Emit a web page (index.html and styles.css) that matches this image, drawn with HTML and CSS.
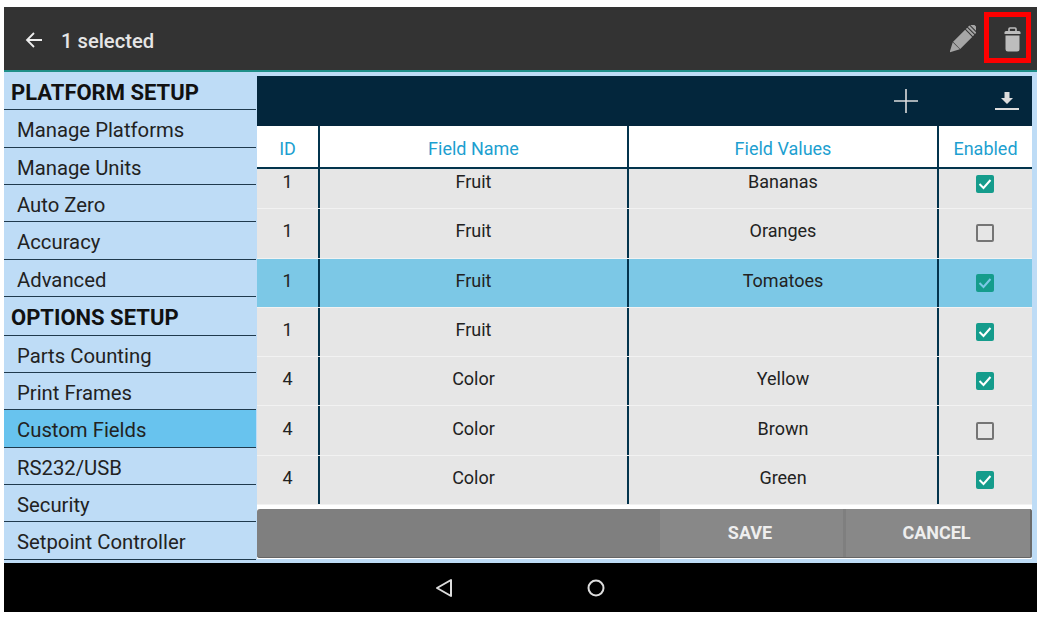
FILE: index.html
```html
<!DOCTYPE html>
<html lang="en">
<head>
    <meta charset="UTF-8">
    <title>Custom Fields</title>
    <link rel="stylesheet" href="styles.css">
</head>
<body>
    <div class="screen">
        <div class="app-bar">
            <svg class="back-icon" width="18" height="16" viewBox="0 0 18 16"><path d="M9 1 2 8l7 7M2 8h15" fill="none" stroke="#eee" stroke-width="1.8"/></svg>
            <span class="app-title">1 selected</span>
            <svg class="pencil-icon" width="26" height="28" viewBox="0 0 26 28">
                <g transform="rotate(45 13 14)" fill="#a6a6a6">
                    <rect x="8" y="-4" width="10" height="3" rx="1"/>
                    <rect x="8" y="0" width="10" height="2"/>
                    <rect x="8" y="3" width="10" height="2"/>
                    <rect x="8" y="6" width="10" height="17"/>
                    <path d="M8 23.500h10L13 33z"/>
                </g>
            </svg>
            <div class="delete-box">
                <svg width="17" height="25" viewBox="0 0 17 25">
                    <path d="M5 4.500V2q0-1 1-1h5q1 0 1 1v2.500" fill="none" stroke="#bdbdbd" stroke-width="1.600"/>
                    <path d="M2 4h13q1.500 0 1.500 1.500V7H.5V5.500Q.5 4 2 4z" fill="#bdbdbd"/>
                    <path d="M1.500 8.500h14V22q0 2.500-2.500 2.500H4Q1.500 24.500 1.500 22z" fill="#bdbdbd"/>
                </svg>
            </div>
        </div>
        <div class="main">
            <div class="sidebar">
                <div class="side-head">PLATFORM SETUP</div>
                <div class="side-item">Manage Platforms</div>
                <div class="side-item">Manage Units</div>
                <div class="side-item">Auto Zero</div>
                <div class="side-item">Accuracy</div>
                <div class="side-item">Advanced</div>
                <div class="side-head">OPTIONS SETUP</div>
                <div class="side-item">Parts Counting</div>
                <div class="side-item">Print Frames</div>
                <div class="side-item active">Custom Fields</div>
                <div class="side-item">RS232/USB</div>
                <div class="side-item">Security</div>
                <div class="side-item">Setpoint Controller</div>
            </div>
            <div class="panel">
                <div class="toolbar">
                    <svg class="plus-icon" width="26" height="26" viewBox="0 0 26 26"><path d="M13 1v24M1 13h24" stroke="#ddd" stroke-width="1.600"/></svg>
                    <svg class="download-icon" width="24" height="20" viewBox="0 0 24 20"><path d="M9.500 1h5v6h3.500l-6 6-6-6h3.500z" fill="#ddd"/><path d="M0 18h24" stroke="#ddd" stroke-width="2"/></svg>
                </div>
                <div class="table-head">
                    <div class="cell id">ID</div>
                    <div class="cell name">Field Name</div>
                    <div class="cell values">Field Values</div>
                    <div class="cell enabled">Enabled</div>
                </div>
                <div class="rows">
                    <div class="row">
                        <div class="cell id">1</div><div class="cell name">Fruit</div><div class="cell values">Bananas</div>
                        <div class="cell enabled"><span class="check on"><svg width="14" height="12" viewBox="0 0 14 12"><path d="M1.500 6l4 4 7-8" fill="none" stroke="#fff" stroke-width="2"/></svg></span></div>
                    </div>
                    <div class="row">
                        <div class="cell id">1</div><div class="cell name">Fruit</div><div class="cell values">Oranges</div>
                        <div class="cell enabled"><span class="check"></span></div>
                    </div>
                    <div class="row selected">
                        <div class="cell id">1</div><div class="cell name">Fruit</div><div class="cell values">Tomatoes</div>
                        <div class="cell enabled"><span class="check on"><svg width="14" height="12" viewBox="0 0 14 12"><path d="M1.500 6l4 4 7-8" fill="none" stroke="#7cc8e6" stroke-width="2"/></svg></span></div>
                    </div>
                    <div class="row">
                        <div class="cell id">1</div><div class="cell name">Fruit</div><div class="cell values"></div>
                        <div class="cell enabled"><span class="check on"><svg width="14" height="12" viewBox="0 0 14 12"><path d="M1.500 6l4 4 7-8" fill="none" stroke="#fff" stroke-width="2"/></svg></span></div>
                    </div>
                    <div class="row">
                        <div class="cell id">4</div><div class="cell name">Color</div><div class="cell values">Yellow</div>
                        <div class="cell enabled"><span class="check on"><svg width="14" height="12" viewBox="0 0 14 12"><path d="M1.500 6l4 4 7-8" fill="none" stroke="#fff" stroke-width="2"/></svg></span></div>
                    </div>
                    <div class="row">
                        <div class="cell id">4</div><div class="cell name">Color</div><div class="cell values">Brown</div>
                        <div class="cell enabled"><span class="check"></span></div>
                    </div>
                    <div class="row">
                        <div class="cell id">4</div><div class="cell name">Color</div><div class="cell values">Green</div>
                        <div class="cell enabled"><span class="check on"><svg width="14" height="12" viewBox="0 0 14 12"><path d="M1.500 6l4 4 7-8" fill="none" stroke="#fff" stroke-width="2"/></svg></span></div>
                    </div>
                </div>
                <div class="actions">
                    <button class="action-btn save">SAVE</button>
                    <button class="action-btn cancel">CANCEL</button>
                </div>
            </div>
        </div>
        <div class="nav-bar">
            <svg width="18" height="20" viewBox="0 0 18 20"><path d="M16 2v16L2 10z" fill="none" stroke="#ddd" stroke-width="2" stroke-linejoin="round"/></svg>
            <svg width="20" height="20" viewBox="0 0 20 20"><circle cx="10" cy="10" r="7.500" fill="none" stroke="#ddd" stroke-width="2"/></svg>
        </div>
    </div>
</body>
</html>
```

FILE: styles.css
```css
html, body {
    margin: 0;
    background: #fff;
}
body {
    font-family: Roboto, sans-serif;
    padding: 7px 7px 7px 4px;
    height: 605px;
    overflow: hidden;
}
.screen {
    display: flex;
    flex-direction: column;
    height: 605px;
}
.app-bar {
    height: 65px;
    flex: none;
    box-sizing: border-box;
    display: flex;
    align-items: center;
    background: #333;
    border-bottom: 2px solid #1f8f88;
    padding-left: 21px;
    padding-right: 6px;
}
.back-icon {
    margin-right: 18px;
    margin-top: 2px;
}
.app-title {
    flex: 1;
    color: #e6e6e6;
    font-size: 20.200px;
    font-weight: 500;
    padding-top: 5px;
}
.pencil-icon {
    margin-right: 8px;
    margin-top: 1px;
}
.delete-box {
    width: 37px;
    height: 41px;
    border: 5px solid #f00;
    margin-bottom: 2px;
    display: flex;
    align-items: center;
    justify-content: center;
}
.delete-box svg {
    margin-left: 9px;
    margin-top: 3px;
    flex: none;
}
.main {
    flex: 1;
    display: flex;
    background: #bedcf6;
    min-height: 0;
}
.sidebar {
    width: 252px;
    padding-top: 1px;
    box-sizing: border-box;
}
.side-head {
    height: 37.450px;
    line-height: 39px;
    box-sizing: border-box;
    padding-left: 7px;
    font-size: 22px;
    font-weight: 700;
    color: #111;
    border-bottom: 1px solid #1f3a4d;
}
.side-item + .side-head {
    height: 38.600px;
    line-height: 41px;
}
.side-item {
    height: 37.350px;
    line-height: 40px;
    box-sizing: border-box;
    padding-left: 13px;
    font-size: 20.300px;
    color: #222;
    border-bottom: 1px solid #1f3a4d;
}
.side-item.active {
    background: #68c3ee;
}
.panel {
    width: 775px;
    margin: 4px 0 4px 1px;
    display: flex;
    flex-direction: column;
    background: #fff;
}
.toolbar {
    height: 50px;
    flex: none;
    background: #03263c;
    display: flex;
    align-items: center;
    justify-content: flex-end;
}
.plus-icon {
    margin-right: 76px;
}
.download-icon {
    margin-right: 13px;
}
.table-head, .row {
    display: grid;
    grid-template-columns: 63px 309px 310px 93px;
}
.table-head {
    height: 43px;
    flex: none;
    box-sizing: border-box;
    background: #fff;
    border-bottom: 2px solid #03344d;
    color: #1d9fd0;
    font-size: 18px;
}
.cell {
    display: flex;
    align-items: center;
    justify-content: center;
    box-sizing: border-box;
    border-right: 2px solid #03344d;
    padding-bottom: 5px;
}
.cell.enabled {
    border-right: none;
    padding-bottom: 0;
}
.row .cell.enabled {
    padding-right: 1px;
}
.table-head .cell {
    padding-top: 3px;
    padding-bottom: 0;
}
.rows {
    height: 336px;
    flex: none;
    overflow: hidden;
}
.row {
    height: 49.300px;
    box-sizing: border-box;
    background: #e6e6e6;
    border-bottom: 1px solid #f2f2f2;
    font-size: 18px;
    color: #222;
}
.row:first-child {
    margin-top: -9px;
}
.row.selected {
    background: #7cc8e6;
}
.check {
    width: 18px;
    height: 18px;
    box-sizing: border-box;
    border: 2px solid #757575;
    border-radius: 2px;
    display: flex;
    align-items: center;
    justify-content: center;
}
.check.on {
    background: #159c8c;
    border: none;
}
.actions {
    margin-top: 4px;
    height: 49px;
    flex: none;
    display: flex;
    justify-content: flex-end;
    background: #7f7f7f;
    border-radius: 3px;
    overflow: hidden;
    box-shadow: inset 0 -1px #666;
}
.action-btn {
    font-family: Roboto, sans-serif;
    font-size: 18px;
    font-weight: 700;
    color: #eee;
    background: #888;
    border: none;
    padding: 0 3px 1px 0;
    border-bottom: 1px solid #666;
}
.save {
    width: 183px;
    margin-right: 3px;
}
.cancel {
    width: 186px;
    border-right: 2px solid #6b6b6b;
}
.nav-bar {
    height: 49px;
    flex: none;
    background: #000;
    display: flex;
    align-items: center;
    justify-content: center;
    gap: 133px;
}
```
